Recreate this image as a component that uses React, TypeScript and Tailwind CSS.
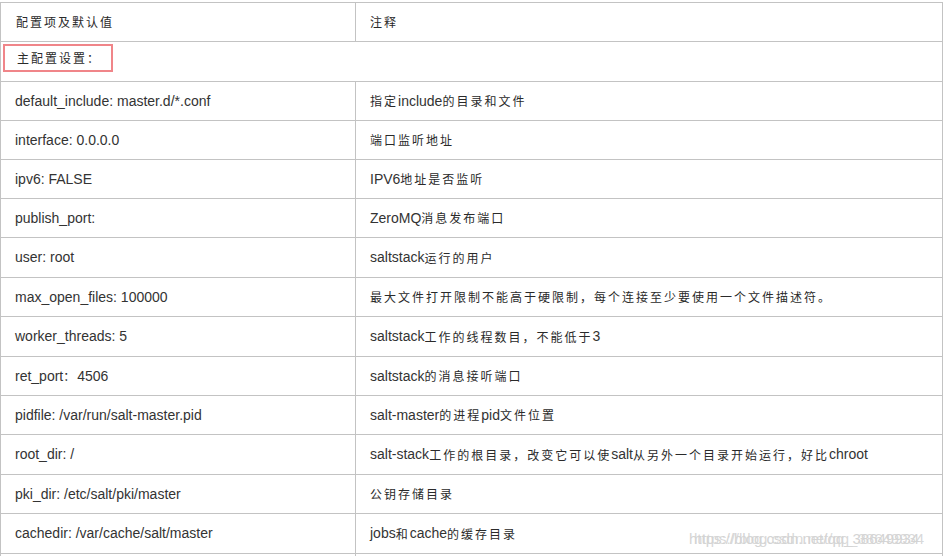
import React from 'react'

type Row = { key: string; note: string; h: number }

const rows: Row[] = [
  { key: 'default_include: master.d/*.conf', note: '指定include的目录和文件', h: 39 },
  { key: 'interface: 0.0.0.0', note: '端口监听地址', h: 39 },
  { key: 'ipv6: FALSE', note: 'IPV6地址是否监听', h: 39 },
  { key: 'publish_port:', note: 'ZeroMQ消息发布端口', h: 39 },
  { key: 'user: root', note: 'saltstack运行的用户', h: 40 },
  { key: 'max_open_files: 100000', note: '最大文件打开限制不能高于硬限制，每个连接至少要使用一个文件描述符。', h: 39 },
  { key: 'worker_threads: 5', note: 'saltstack工作的线程数目，不能低于3', h: 40 },
  { key: 'ret_port：4506', note: 'saltstack的消息接听端口', h: 39 },
  { key: 'pidfile: /var/run/salt-master.pid', note: 'salt-master的进程pid文件位置', h: 39 },
  { key: 'root_dir: /', note: 'salt-stack工作的根目录，改变它可以使salt从另外一个目录开始运行，好比chroot', h: 40 },
  { key: 'pki_dir: /etc/salt/pki/master', note: '公钥存储目录', h: 39 },
  { key: 'cachedir: /var/cache/salt/master', note: 'jobs和cache的缓存目录', h: 40 },
  { key: '', note: '', h: 39 },
  { key: '', note: '', h: 39 },
]

// CJK runs get their own font, size and spacing, Latin keeps Liberation Sans
const Mixed: React.FC<{ text: string }> = ({ text }) => {
  const parts = text.split(/([\u3000-\u9fff\uff00-\uffef]+)/)
  return (
    <>
      {parts.map((p, i) =>
        /[\u3000-\u9fff\uff00-\uffef]/.test(p) ? (
          <span key={i} className="font-['Noto_Sans_CJK_SC',sans-serif] text-[12px] tracking-[2px] text-[#2a2a2a]">
            {p}
          </span>
        ) : (
          <span key={i} className="font-['Liberation_Sans',Arial,sans-serif] text-[14px]">
            {p}
          </span>
        )
      )}
    </>
  )
}

export default function App() {
  return (
    <div className="relative w-[944px] h-[556px] overflow-hidden bg-white pt-[2px] font-['Liberation_Sans','Noto_Sans_CJK_SC',sans-serif] text-[14px] text-[#333]">
      <div className="w-[943px] border-l border-r border-t border-[#c3c3c3]">
        {/* header */}
        <div className="flex h-[39px] border-b border-[#c3c3c3]">
          <div className="w-[355px] shrink-0 border-r border-[#c3c3c3] pl-[15px] flex items-center">
            <Mixed text="配置项及默认值" />
          </div>
          <div className="flex-1 pl-[14px] flex items-center">
            <Mixed text="注释" />
          </div>
        </div>

        {/* section row, spans both columns */}
        <div className="h-[40px] border-b border-[#c3c3c3] pl-[2px] pt-[1px]">
          <div className="inline-flex items-center h-[28px] w-[110px] border-2 border-[#f08589] pl-[12px]">
            <Mixed text="主配置设置：" />
          </div>
        </div>

        {rows.map((r, i) => (
          <div key={i} className="flex border-b border-[#c3c3c3]" style={{ height: r.h }}>
            <div className="w-[355px] shrink-0 border-r border-[#c3c3c3] pl-[14px] flex items-center whitespace-nowrap">
              <Mixed text={r.key} />
            </div>
            <div className="flex-1 pl-[14px] flex items-center whitespace-nowrap">
              <Mixed text={r.note} />
            </div>
          </div>
        ))}
      </div>

      {/* csdn watermark, doubled look via a shadow copy */}
      <div className="absolute left-[689px] top-[528px] font-['Liberation_Sans',Arial,sans-serif] text-[15px] text-[#d4d4d4] whitespace-nowrap [text-shadow:5px_0_0_rgba(200,200,200,0.7)]">
        https://blog.csdn.net/qq_38649934
      </div>
    </div>
  )
}
